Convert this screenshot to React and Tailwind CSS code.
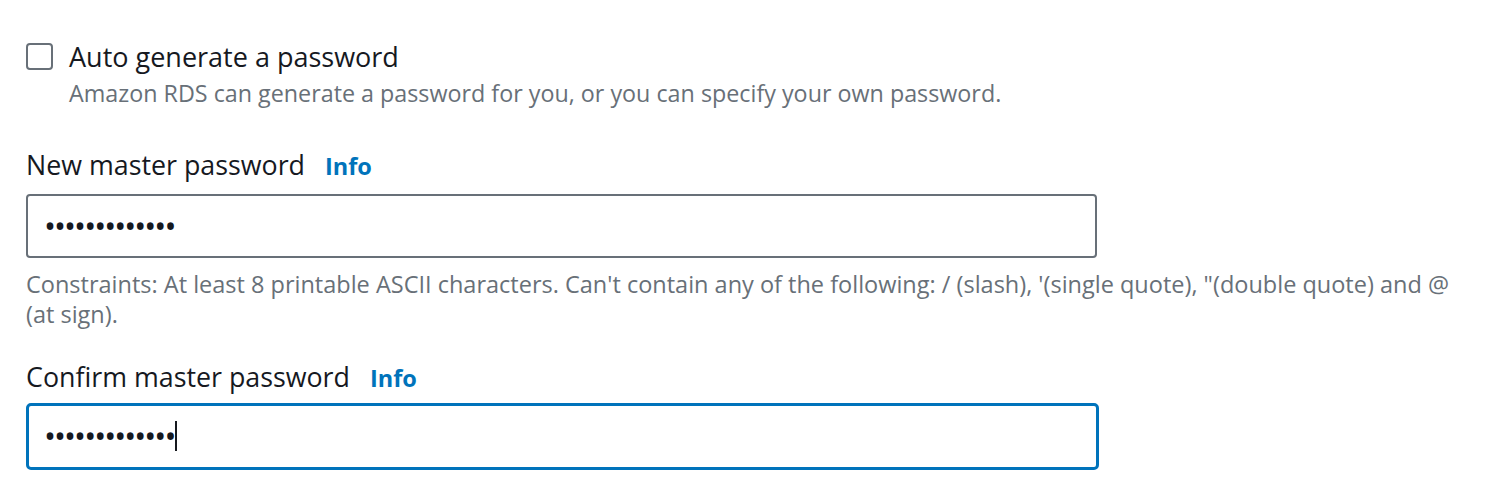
export default function App() {
  const font = { fontFamily: '"Open Sans", "Noto Sans", sans-serif' };
  return (
    <div className="min-h-[498px] w-[1496px] bg-white pl-[26px] pt-[42px] text-[#16191f]" style={font}>
      {/* Auto generate checkbox */}
      <div className="flex items-start gap-[16px]">
        <div className="mt-[1px] h-[27px] w-[27px] shrink-0 rounded-[4px] border-2 border-[#687078] bg-white" />
        <div>
          <div className="text-[27px] leading-[30px]">Auto generate a password</div>
          <div className="mt-[6px] text-[23.3px] leading-[30px] text-[#687078]">
            Amazon RDS can generate a password for you, or you can specify your own password.
          </div>
        </div>
      </div>

      {/* New master password */}
      <div className="mt-[40px] flex items-baseline gap-[20px]">
        <span className="text-[26.8px] leading-[34px]">New master password</span>
        <a href="#" className="text-[23.5px] font-bold text-[#0073bb]">Info</a>
      </div>
      <div className="mt-[10px] flex h-[64px] w-[1071px] items-center rounded-[4px] border-2 border-[#687078] px-[16px]">
        <span className="text-[32px] leading-[32px] tracking-[-2px] text-[#16191f]">•••••••••••••</span>
      </div>
      <div className="mt-[11px] w-[1440px] text-[23.5px] leading-[30px] text-[#687078]">
        Constraints: At least 8 printable ASCII characters. Can't contain any of the following: / (slash), '(single quote), "(double quote) and @ (at sign).
      </div>

      {/* Confirm master password */}
      <div className="mt-[31px] flex items-baseline gap-[20px]">
        <span className="text-[26.8px] leading-[34px]">Confirm master password</span>
        <a href="#" className="text-[23.5px] font-bold text-[#0073bb]">Info</a>
      </div>
      <div className="mt-[6px] flex h-[67px] w-[1073px] items-center rounded-[5px] border-[3px] border-[#0073bb] px-[15px]">
        <span className="text-[32px] leading-[32px] tracking-[-2px] text-[#16191f]">•••••••••••••</span>
        <span className="ml-[1px] h-[30px] w-[2px] bg-[#16191f]" />
      </div>
    </div>
  );
}
